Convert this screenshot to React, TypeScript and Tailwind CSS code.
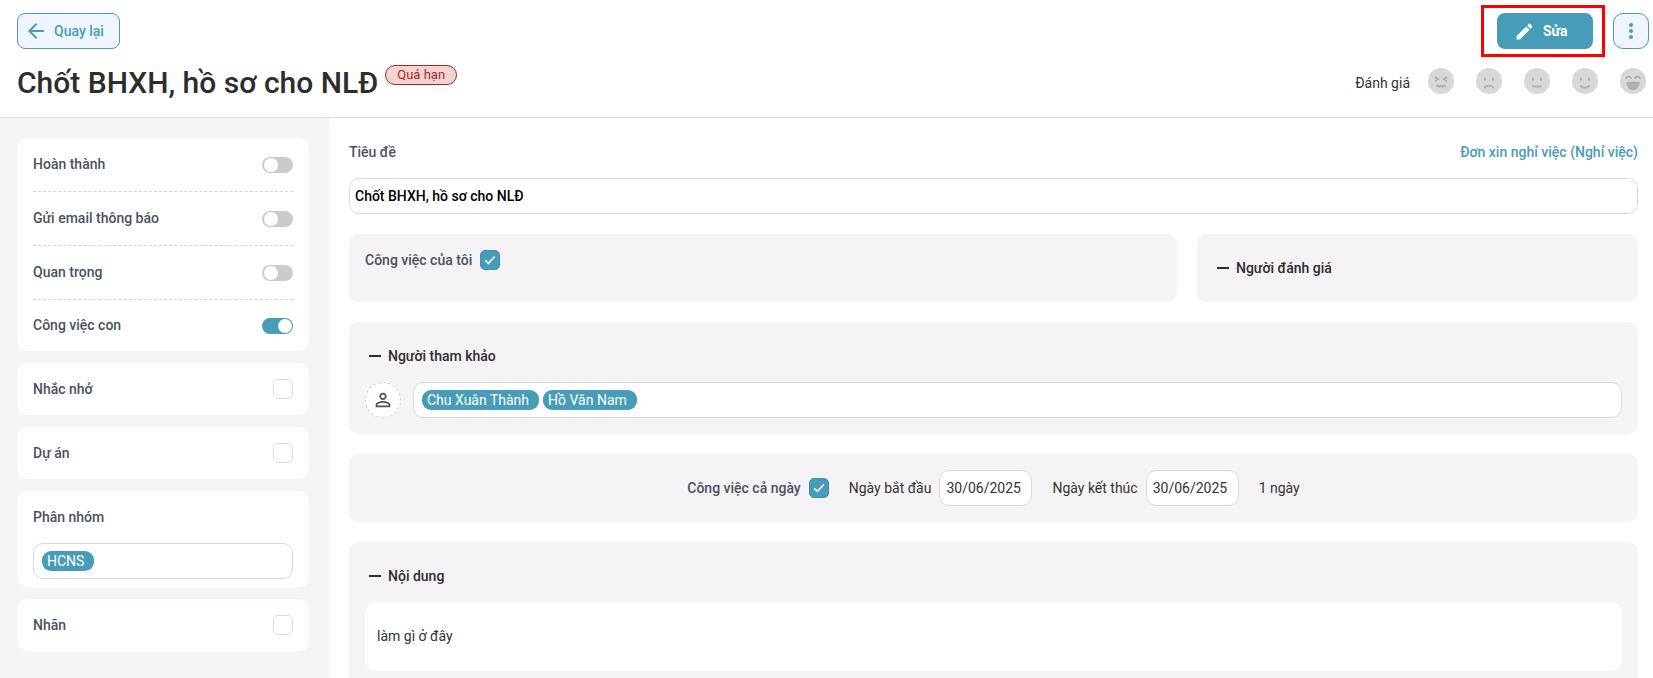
import { useState } from "react";
import type { ReactNode } from "react";
import { MdArrowBack, MdEdit, MdMoreVert, MdPersonOutline } from "react-icons/md";

function CheckBox({ label, checked, id }: { label: string; checked?: boolean; id: string }) {
  const [on, setOn] = useState(!!checked);
  return (
    <span className="relative inline-flex h-5 w-5 shrink-0">
      <input
        id={id}
        type="checkbox"
        aria-label={label}
        checked={on}
        onChange={() => setOn(!on)}
        className="h-5 w-5 appearance-none rounded-[5px] border border-[#dcdcdc] bg-white checked:border-[#3f90aa] checked:bg-[#479db8]"
      />
      {on && (
        <svg viewBox="0 0 20 20" className="pointer-events-none absolute inset-0 h-5 w-5">
          <path d="M5.2 10.2l3.2 3.2 6.3-6.9" fill="none" stroke="#fff" strokeWidth="1.6" />
        </svg>
      )}
    </span>
  );
}

function Toggle({ id, initial }: { id: string; initial?: boolean }) {
  const [on, setOn] = useState(!!initial);
  return (
    <span className="relative inline-flex h-4 w-[31px]">
      <input
        id={id}
        type="checkbox"
        role="switch"
        checked={on}
        onChange={() => setOn(!on)}
        className="peer h-4 w-[31px] appearance-none rounded-full bg-[#cbcbcb] checked:bg-[#479db8]"
      />
      <span className="pointer-events-none absolute left-[2px] top-px h-[14px] w-[14px] rounded-full bg-white peer-checked:left-4" />
    </span>
  );
}

function Tag({ children }: { children: ReactNode }) {
  return (
    <span className="h-5 rounded-[9px] bg-[#479db8] pl-[5px] pr-[10px] text-[14px] leading-5 text-white">
      {children}
    </span>
  );
}

function Heading({ children }: { children: ReactNode }) {
  return (
    <h2 className="flex h-9 items-center gap-[7px] pl-1 text-[14px] font-medium text-[#2d2d2d]">
      <span className="h-[2px] w-3 bg-[#2d2d2d]" />
      {children}
    </h2>
  );
}

const faces: { name: string; art: ReactNode }[] = [
  {
    name: "Rất tệ",
    art: (
      <g fill="none" stroke="#b0b0b0" strokeWidth="1.8">
        <path d="M7 9l3.2 2L7 13M19 9l-3.2 2 3.2 2" />
        <path d="M8.300 18.800l1.600-1.300 1.500 1.300 1.600-1.300 1.600 1.300 1.500-1.300 1.600 1.300" />
      </g>
    ),
  },
  {
    name: "Tệ",
    art: (
      <g fill="none" stroke="#b2b2b2" strokeWidth="2" strokeLinecap="round">
        <path d="M9 10.500v1.600M17 10.500v1.600M8.800 19.400c2-2.200 6.400-2.200 8.400 0" />
      </g>
    ),
  },
  {
    name: "Bình thường",
    art: (
      <g fill="none" stroke="#b2b2b2" strokeWidth="2" strokeLinecap="round">
        <path d="M9 10.500v1.600M17 10.500v1.600M9 18.500h8" />
      </g>
    ),
  },
  {
    name: "Tốt",
    art: (
      <g fill="none" stroke="#b2b2b2" strokeWidth="2" strokeLinecap="round">
        <path d="M9 10.500v1.600M17 10.500v1.600M8.800 18c2 2.200 6.400 2.200 8.400 0" />
      </g>
    ),
  },
  {
    name: "Rất tốt",
    art: (
      <g fill="none" stroke="#b0b0b0" strokeWidth="1.800" strokeLinecap="round">
        <path d="M6 10.200c1-2.100 4-2.100 5 0M15 10.200c1-2.100 4-2.100 5 0" />
        <path d="M6.300 13.800h13.400c0 5-2.700 8.400-6.700 8.400s-6.700-3.400-6.700-8.400z" fill="#b0b0b0" stroke="none" />
      </g>
    ),
  },
];

const label = "text-[14px] font-medium text-[#4a5260]";
const field = "h-9 rounded-[10px] border border-[#d9d9d9] bg-white";
const panel = "rounded-[10px] bg-[#f5f3f5]";

const switches = [
  { id: "done", text: "Hoàn thành" },
  { id: "email", text: "Gửi email thông báo" },
  { id: "important", text: "Quan trọng" },
  { id: "subtask", text: "Công việc con", on: true },
];

function SideOption({ id, text }: { id: string; text: string }) {
  return (
    <div className="flex h-[52px] items-center justify-between rounded-[10px] bg-white px-4">
      <label htmlFor={id} className={label}>{text}</label>
      <CheckBox id={id} label={text} />
    </div>
  );
}

export default function App() {
  return (
    <div className="flex h-screen flex-col overflow-hidden bg-white font-[Roboto,sans-serif] text-[14px] text-[#333]">
      <header className="shrink-0 border-b border-[#dcdcdc] pb-4 pl-[17px] pr-1 pt-[5px]">
        <div className="flex items-center justify-between">
          <button className="flex h-9 items-center gap-[6px] rounded-lg border border-[#479db8] bg-[#eff5fc] pl-[6px] pr-[15px] font-medium text-[#479db8]">
            <MdArrowBack className="h-6 w-6" />
            Quay lại
          </button>
          <div className="flex items-center gap-2">
            <div className="border-[3px] border-[#fe0000] py-[5px] pl-[13px] pr-[9px]">
              <button className="flex h-9 w-24 items-center gap-2 rounded-lg bg-[#479db8] pl-[17px] font-bold text-white">
                <MdEdit className="h-[21px] w-[21px]" />
                Sửa
              </button>
            </div>
            <button aria-label="Thêm" className="flex h-9 w-9 items-center justify-center rounded-[10px] border border-[#479db8] bg-[#eff5fc] text-[#479db8]">
              <MdMoreVert className="h-6 w-6" />
            </button>
          </div>
        </div>
        <div className="flex items-start justify-between pt-2">
          <div className="flex items-start gap-[7px]">
            <h1 className="text-[30px] font-medium leading-[36px] text-[#2d2d2d]">Chốt BHXH, hồ sơ cho NLĐ</h1>
            <span className="h-5 rounded-full border border-[#b3261e] bg-[#efd4d2] px-[11px] text-[13px] leading-[18px] text-[#b3261e]">
              Quá hạn
            </span>
          </div>
          <div className="flex items-start gap-[22px] pr-[3px] pt-[3px]">
            <span className="-mr-1 pt-1 leading-[22px]">Đánh giá</span>
            {faces.map((f) => (
              <button key={f.name} aria-label={f.name} className="h-[26px] w-[26px]">
                <svg viewBox="0 0 26 26" className="h-[26px] w-[26px]">
                  <circle cx="13" cy="13" r="13" fill="#d8d8d8" />
                  {f.art}
                </svg>
              </button>
            ))}
          </div>
        </div>
      </header>

      <div className="flex min-h-0 flex-1">
        <aside className="flex w-[329px] shrink-0 flex-col gap-3 bg-[#f5f3f5] pl-[17px] pr-5 pt-5">
          <div className="rounded-[10px] bg-white px-4">
            {switches.map((s) => (
              <div
                key={s.id}
                className="flex h-[54px] items-center justify-between border-b border-dashed border-[#d3d3d3] last:h-[51px] last:border-b-0"
              >
                <label htmlFor={s.id} className={label}>{s.text}</label>
                <Toggle id={s.id} initial={s.on} />
              </div>
            ))}
          </div>
          <SideOption id="remind" text="Nhắc nhở" />
          <SideOption id="project" text="Dự án" />
          <div className="rounded-[10px] bg-white px-4 pb-2">
            <div className={`flex h-[52px] items-center ${label}`}>Phân nhóm</div>
            <div className={`flex items-center px-2 ${field}`}>
              <Tag>HCNS</Tag>
            </div>
          </div>
          <SideOption id="labels" text="Nhãn" />
        </aside>

        <main className="flex min-w-0 flex-1 flex-col gap-5 overflow-hidden pl-5 pr-[15px] pt-5">
          <div>
            <div className="flex h-10 items-start justify-between pt-1 leading-5">
              <label htmlFor="title" className={label}>Tiêu đề</label>
              <a href="#don" className="font-medium text-[#479db8]">Đơn xin nghỉ việc (Nghỉ việc)</a>
            </div>
            <input id="title" defaultValue="Chốt BHXH, hồ sơ cho NLĐ" className={`block w-full px-[5px] font-medium text-black ${field}`} />
          </div>

          <div className="grid shrink-0 grid-cols-[828fr_441fr] gap-5">
            <div className={`flex h-[68px] items-start gap-2 p-4 ${panel}`}>
              <label htmlFor="mine" className={`leading-5 ${label}`}>Công việc của tôi</label>
              <CheckBox id="mine" label="Công việc của tôi" checked />
            </div>
            <div className={`p-4 ${panel}`}>
              <Heading>Người đánh giá</Heading>
            </div>
          </div>

          <section className={`shrink-0 p-4 ${panel}`}>
            <Heading>Người tham khảo</Heading>
            <div className="mt-2 flex gap-3">
              <button aria-label="Chọn người" className="flex h-9 w-9 shrink-0 items-center justify-center rounded-full border border-dashed border-[#d3d3d3] bg-white text-[#4a5260]">
                <MdPersonOutline className="h-[22px] w-[22px]" />
              </button>
              <div className={`flex flex-1 items-center gap-1 px-2 ${field}`}>
                <Tag>Chu Xuân Thành</Tag>
                <Tag>Hồ Văn Nam</Tag>
              </div>
            </div>
          </section>

          <section className={`flex shrink-0 items-center justify-center gap-5 p-4 ${panel}`}>
            <div className="flex items-center gap-2">
              <label htmlFor="allday" className={label}>Công việc cả ngày</label>
              <CheckBox id="allday" label="Công việc cả ngày" checked />
            </div>
            <div className="flex items-center gap-2">
              <label htmlFor="start">Ngày bắt đầu</label>
              <input id="start" defaultValue="30/06/2025" className={`w-[93px] px-[6px] ${field}`} />
            </div>
            <div className="flex items-center gap-2">
              <label htmlFor="end">Ngày kết thúc</label>
              <input id="end" defaultValue="30/06/2025" className={`w-[93px] px-[6px] ${field}`} />
            </div>
            <span>1 ngày</span>
          </section>

          <section className={`shrink-0 p-4 ${panel}`}>
            <Heading>Nội dung</Heading>
            <div className="mt-2 rounded-[10px] bg-white px-3 py-6 leading-[21px]">làm gì ở đây</div>
          </section>
        </main>
      </div>
    </div>
  );
}
